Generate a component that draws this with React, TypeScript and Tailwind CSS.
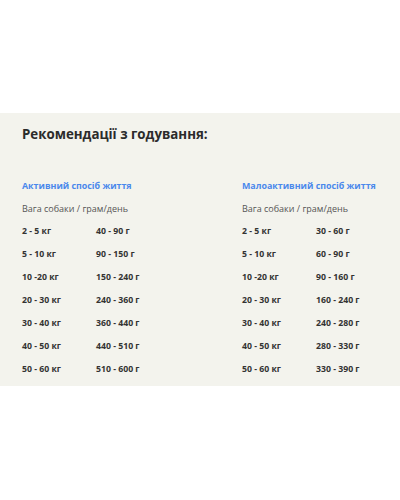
import React from "react";

const active = [
  ["2 - 5 кг", "40 - 90 г"],
  ["5 - 10 кг", "90 - 150 г"],
  ["10 -20 кг", "150 - 240 г"],
  ["20 - 30 кг", "240 - 360 г"],
  ["30 - 40 кг", "360 - 440 г"],
  ["40 - 50 кг", "440 - 510 г"],
  ["50 - 60 кг", "510 - 600 г"],
];
const low = [
  ["2 - 5 кг", "30 - 60 г"],
  ["5 - 10 кг", "60 - 90 г"],
  ["10 -20 кг", "90 - 160 г"],
  ["20 - 30 кг", "160 - 240 г"],
  ["30 - 40 кг", "240 - 280 г"],
  ["40 - 50 кг", "280 - 330 г"],
  ["50 - 60 кг", "330 - 390 г"],
];

function Column({ title, rows }: { title: string; rows: string[][] }) {
  return (
    <div className="w-[220px] shrink-0 flex flex-col">
      <div className="h-[23px] leading-[23px] text-[8.9px] font-bold text-[#4a88ec]">{title}</div>
      <div className="h-[23px] leading-[23px] text-[9px] text-[#555]">Вага собаки / грам/день</div>
      {rows.map((r, i) => (
        <div key={i} className="h-[23px] leading-[23px] text-[8.7px] font-bold text-[#333] flex">
          <span className="w-[74px]">{r[0]}</span>
          <span>{r[1]}</span>
        </div>
      ))}
    </div>
  );
}

export default function App() {
  return (
    <div className="w-[400px] h-[500px] bg-white overflow-hidden" style={{ fontFamily: '"Open Sans", sans-serif' }}>
      <div className="h-[113px]" />
      <div className="bg-[#f3f3ed] pl-[22px] pt-[9px] pb-[5px]">
        <div className="h-[24px] leading-[24px] text-[13.3px] font-bold text-[#2b2b2b]">Рекомендації з годування:</div>
        <div className="flex mt-[28px]">
          <Column title="Активний спосіб життя" rows={active} />
          <Column title="Малоактивний спосіб життя" rows={low} />
        </div>
      </div>
    </div>
  );
}
